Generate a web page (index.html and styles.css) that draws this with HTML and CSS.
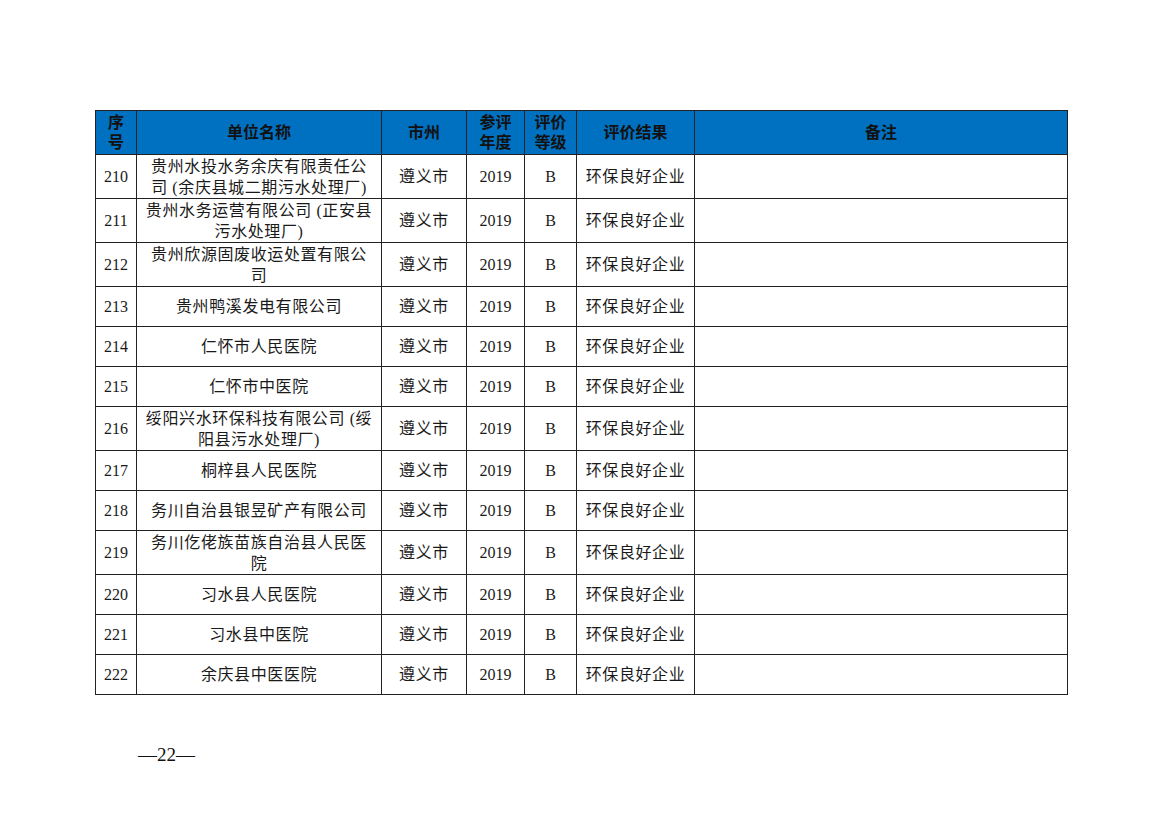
FILE: index.html
```html
<!DOCTYPE html>
<html lang="zh-CN">
<head>
<meta charset="utf-8">
<title>环保良好企业名单</title>
<link rel="stylesheet" href="styles.css">
</head>
<body>
<main class="page">
  <table class="sheet">
    <colgroup>
      <col class="c-no"><col class="c-name"><col class="c-city"><col class="c-year"><col class="c-grade"><col class="c-result"><col class="c-note">
    </colgroup>
    <thead>
      <tr class="head">
        <th>序<br>号</th>
        <th>单位名称</th>
        <th>市州</th>
        <th>参评<br>年度</th>
        <th>评价<br>等级</th>
        <th>评价结果</th>
        <th>备注</th>
      </tr>
    </thead>
    <tbody>
      <tr class="tall"><td class="num">210</td><td>贵州水投水务余庆有限责任公<br>司 (余庆县城二期污水处理厂)</td><td>遵义市</td><td class="num">2019</td><td class="num">B</td><td>环保良好企业</td><td></td></tr>
      <tr class="tall"><td class="num">211</td><td>贵州水务运营有限公司 (正安县<br>污水处理厂)</td><td>遵义市</td><td class="num">2019</td><td class="num">B</td><td>环保良好企业</td><td></td></tr>
      <tr class="tall"><td class="num">212</td><td>贵州欣源固废收运处置有限公<br>司</td><td>遵义市</td><td class="num">2019</td><td class="num">B</td><td>环保良好企业</td><td></td></tr>
      <tr><td class="num">213</td><td>贵州鸭溪发电有限公司</td><td>遵义市</td><td class="num">2019</td><td class="num">B</td><td>环保良好企业</td><td></td></tr>
      <tr><td class="num">214</td><td>仁怀市人民医院</td><td>遵义市</td><td class="num">2019</td><td class="num">B</td><td>环保良好企业</td><td></td></tr>
      <tr><td class="num">215</td><td>仁怀市中医院</td><td>遵义市</td><td class="num">2019</td><td class="num">B</td><td>环保良好企业</td><td></td></tr>
      <tr class="tall"><td class="num">216</td><td>绥阳兴水环保科技有限公司 (绥<br>阳县污水处理厂)</td><td>遵义市</td><td class="num">2019</td><td class="num">B</td><td>环保良好企业</td><td></td></tr>
      <tr><td class="num">217</td><td>桐梓县人民医院</td><td>遵义市</td><td class="num">2019</td><td class="num">B</td><td>环保良好企业</td><td></td></tr>
      <tr><td class="num">218</td><td>务川自治县银昱矿产有限公司</td><td>遵义市</td><td class="num">2019</td><td class="num">B</td><td>环保良好企业</td><td></td></tr>
      <tr class="tall"><td class="num">219</td><td>务川仡佬族苗族自治县人民医<br>院</td><td>遵义市</td><td class="num">2019</td><td class="num">B</td><td>环保良好企业</td><td></td></tr>
      <tr><td class="num">220</td><td>习水县人民医院</td><td>遵义市</td><td class="num">2019</td><td class="num">B</td><td>环保良好企业</td><td></td></tr>
      <tr><td class="num">221</td><td>习水县中医院</td><td>遵义市</td><td class="num">2019</td><td class="num">B</td><td>环保良好企业</td><td></td></tr>
      <tr><td class="num">222</td><td>余庆县中医医院</td><td>遵义市</td><td class="num">2019</td><td class="num">B</td><td>环保良好企业</td><td></td></tr>
    </tbody>
  </table>
  <footer class="pageno">—22—</footer>
</main>
</body>
</html>
```
FILE: styles.css
```css
html, body {
  margin: 0;
  padding: 0;
  background: #ffffff;
}

.page {
  padding: 110px 0 0 95px;
}

.sheet {
  border-collapse: collapse;
  table-layout: fixed;
  width: 972px;
  font-family: "Liberation Serif", "Noto Sans CJK SC", serif;
  font-size: 16px;
  color: #1a1a1a;
}

.c-no { width: 41px; }
.c-name { width: 245px; }
.c-city { width: 85px; }
.c-year { width: 58px; }
.c-grade { width: 52px; }
.c-result { width: 118px; }
.c-note { width: 373px; }

.sheet th,
.sheet td {
  border: 1px solid #222222;
  padding: 0;
  text-align: center;
  vertical-align: middle;
  line-height: 21px;
}

.head th {
  height: 43px;
  background: #0070c0;
  font-family: "Liberation Sans", "Noto Sans CJK SC", sans-serif;
  font-weight: 700;
  font-size: 16px;
  line-height: 20px;
  color: #111111;
}

.sheet tbody tr td {
  height: 39px;
}

.sheet tbody tr.tall td {
  height: 43px;
}

.sheet td {
  font-family: "Liberation Serif", "Noto Sans CJK SC", serif;
  letter-spacing: 0.6px;
}

.sheet td.num {
  letter-spacing: 0;
}

.pageno {
  margin: 50px 0 0 43px;
  font-family: "Liberation Serif", serif;
  font-size: 19px;
  line-height: 20px;
  color: #111111;
}
```
